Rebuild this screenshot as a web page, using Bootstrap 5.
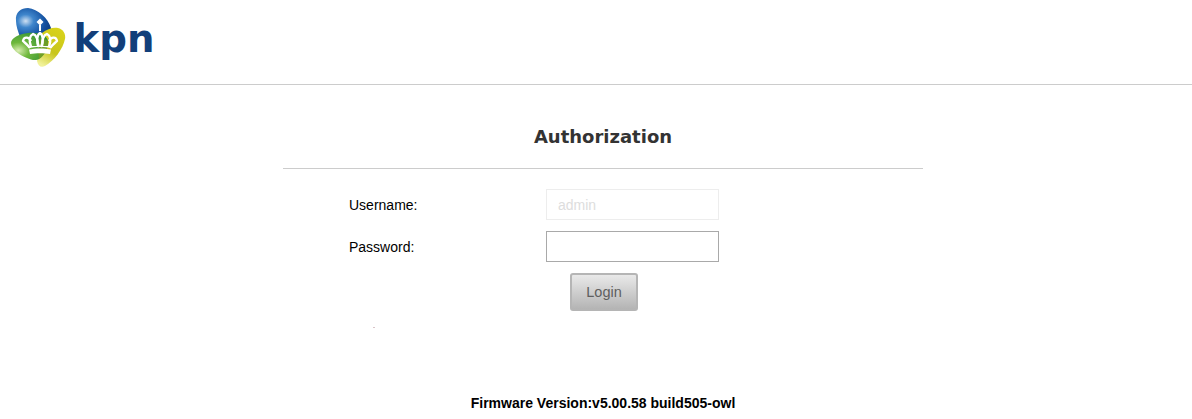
<!DOCTYPE html>
<html lang="en">
<head>
<meta charset="utf-8">
<title>Authorization</title>
<link rel="stylesheet" href="https://cdn.jsdelivr.net/npm/bootstrap@5.3.0/dist/css/bootstrap.min.css">
<style>
html,body{height:419px;overflow:hidden}
body{background:#fff;font-family:"Liberation Sans",Arial,sans-serif;color:#000}
.top-bar{height:85px;border-bottom:1px solid #ccc;padding-left:10px;padding-top:5px}
.logo-svg{display:block}
.logo-word{font-family:"DejaVu Sans",sans-serif;font-weight:700;font-size:39px;fill:#123f7a}
.auth-box{width:640px;margin-left:283px}
.auth-title{font-family:"DejaVu Sans",sans-serif;font-weight:700;font-size:18px;line-height:24px;color:#333;text-align:center;padding-top:40px;padding-bottom:20px;border-bottom:1px solid #ccc;margin:0;height:84px}
.auth-row{display:flex;align-items:center;height:31px;font-size:14px;margin-bottom:11px}
.auth-row:first-of-type{margin-top:20px}
.auth-label{width:263px;padding-left:66px;padding-top:2px}
.auth-input{width:173px;height:31px;border:1px solid #a9a9a9;border-radius:0;padding:0 11px;font-size:14px;font-family:inherit;background:#fff;outline:none}
.auth-input:disabled{border-color:#ededed;background:#fff;color:#ddd;opacity:1}
.btn-row{margin-left:287px;margin-top:0}
.btn-login{display:block;width:68px;height:38px;padding:0;border:2px solid #b5b5b5;border-radius:3px;background:linear-gradient(#e9e9e9,#b4b4b4);color:#5f5f5f;font-size:14.5px;font-family:inherit;line-height:1}
.btn-login:hover{background:linear-gradient(#e9e9e9,#b4b4b4);color:#5f5f5f;border-color:#b5b5b5}
.speck{width:2px;height:1px;background:#d9c4c8;margin:16px 0 0 90px}
.fw-line{font-size:14px;font-weight:700;line-height:16px;text-align:center;position:absolute;left:0;right:0;top:395px;padding-left:14px}
</style>
</head>
<body>
<header class="top-bar">
<svg class="logo-svg" width="150" height="66" viewBox="10 5 150 66" xmlns="http://www.w3.org/2000/svg" role="img" aria-label="kpn">
<defs>
<radialGradient id="gb" cx="28%" cy="45%" r="75%"><stop offset="0" stop-color="#cfe0f2"/><stop offset=".3" stop-color="#3f86cc"/><stop offset=".75" stop-color="#124f9f"/><stop offset="1" stop-color="#0d3d80"/></radialGradient>
<radialGradient id="gg" cx="20%" cy="65%" r="85%"><stop offset="0" stop-color="#d8ecb0"/><stop offset=".35" stop-color="#6fb83c"/><stop offset="1" stop-color="#2f8f35"/></radialGradient>
<linearGradient id="gy" x1="0.700" y1="0" x2="0.300" y2="1"><stop offset="0" stop-color="#d8d21a"/><stop offset=".6" stop-color="#c8c51c"/><stop offset="1" stop-color="#f1f29a"/></linearGradient>
</defs>
<path d="M16 21C15 12 21 8 28 8C38 9 48 18 51 28L50 36L20 37C18 31 16 26 16 21Z" fill="url(#gb)"/>
<path d="M42 33C47 29 53 27 58 28C63 29 66 34 65 39C63 49 54 61 45 66C41 68 38 66 37 61Z" fill="url(#gy)"/>
<path d="M11 43C11 38 19 34 28 33C38 32 48 35 48 42C48 49 44 56 39 59C36 61 31 60 27 58C19 55 11 49 11 43Z" fill="url(#gg)"/>
<path d="M41 38C44 38 47 40 48 42C48 49 44 56 39 59C38 52 38 44 41 38Z" fill="#7f9f22" fill-opacity=".75"/>
<path d="M40 18.500L43.500 22L40 25.500L36.500 22Z" fill="#fff"/>
<rect x="39" y="25" width="2" height="6" fill="#fff"/>
<g fill="none" stroke="#fff" stroke-width="2.400" stroke-linejoin="round">
<path d="M30 48C27 44 25 43 23 41C24 36 29 37 31 41"/>
<path d="M31 47C29 41 29 36 33 34C37 35 38 40 38 47"/>
<path d="M39 47C36 41 37 35 40 33C43 35 44 41 41 47"/>
<path d="M42 47C42 40 43 35 47 34C51 36 51 41 49 47"/>
<path d="M50 48C53 44 55 43 57 41C56 36 51 37 49 41"/>
</g>
<path d="M30 46H50L52 48C45 46.500 35 46.500 28 48Z" fill="#fff"/>
<path d="M29 49.500C35 48 45 48 51 49.500L50 54C44 53 36 53 30 54Z" fill="#fff"/>
<text class="logo-word" x="73.500" y="52" textLength="81" lengthAdjust="spacingAndGlyphs">kpn</text>
</svg>
</header>
<main class="auth-box">
<h1 class="auth-title">Authorization</h1>
<form>
<div class="auth-row"><label class="auth-label" for="u">Username:</label><input class="auth-input" id="u" type="text" value="admin" disabled></div>
<div class="auth-row"><label class="auth-label" for="p">Password:</label><input class="auth-input" id="p" type="password"></div>
<div class="btn-row"><button type="button" class="btn btn-login">Login</button></div>
<div class="speck"></div>
</form>
</main>
<footer class="fw-line">Firmware Version:v5.00.58 build505-owl</footer>
</body>
</html>
